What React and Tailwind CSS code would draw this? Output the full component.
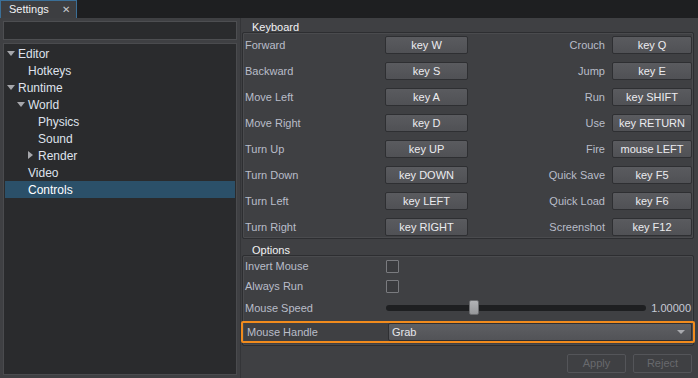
import { useState } from "react";

const tree = [
  { label: "Editor", depth: 0, arrow: "down" },
  { label: "Hotkeys", depth: 1 },
  { label: "Runtime", depth: 0, arrow: "down" },
  { label: "World", depth: 1, arrow: "down" },
  { label: "Physics", depth: 2 },
  { label: "Sound", depth: 2 },
  { label: "Render", depth: 2, arrow: "right" },
  { label: "Video", depth: 1 },
  { label: "Controls", depth: 1, selected: true },
];

const keys = [
  ["Forward", "key W", "Crouch", "key Q"],
  ["Backward", "key S", "Jump", "key E"],
  ["Move Left", "key A", "Run", "key SHIFT"],
  ["Move Right", "key D", "Use", "key RETURN"],
  ["Turn Up", "key UP", "Fire", "mouse LEFT"],
  ["Turn Down", "key DOWN", "Quick Save", "key F5"],
  ["Turn Left", "key LEFT", "Quick Load", "key F6"],
  ["Turn Right", "key RIGHT", "Screenshot", "key F12"],
];

const padL = ["pl-[13px]", "pl-[23px]", "pl-[33px]"];
const arrowL = ["left-[2px]", "left-[12px]", "left-[23px]"];

function KeyButton({ children }) {
  return (
    <div className="h-[18px] rounded-[2px] border border-[#2e2f32] bg-gradient-to-b from-[#5a5b5f] to-[#505155] text-[#ececf0] flex items-center justify-center leading-none">
      {children}
    </div>
  );
}

function Check() {
  return <div className="w-[13px] h-[13px] rounded-[1px] border border-[#7a7b7f] bg-[#3a3b3e]" />;
}

export default function App() {
  const [sel] = useState("Controls");

  return (
    <div className="w-[698px] h-[378px] bg-[#3f4043] flex flex-col overflow-hidden text-[11px]" style={{ fontFamily: "'Liberation Sans', Arial, sans-serif" }}>
      {/* Tab bar */}
      <div className="h-[18px] bg-[#1e1f21] flex shrink-0">
        <div className="w-[77px] bg-[#3d3e41] border-x border-t border-[#3b6f97] flex items-center pl-[8px] pr-[6px] text-[#f2f2f4]">
          <span className="flex-1">Settings</span>
          <span className="text-[#c8c8cc] text-[10px]">✕</span>
        </div>
      </div>

      <div className="flex flex-1 min-h-0">
        {/* Left: search + tree */}
        <div className="w-[234px] ml-[3px] pt-[3px] pb-[3px] flex flex-col gap-[3px] shrink-0">
          <div className="h-[19px] bg-[#2a2b2d] border border-[#4d4e51]" />
          <div className="flex-1 bg-[#2a2b2d] border border-[#4a4b4e] pt-[1px] px-[1px] text-[12px] text-[#dfe2ec]">
            {tree.map((n) => (
              <div key={n.label} className={`relative h-[17px] flex items-center ${padL[n.depth]} ${n.label === sel ? "bg-[#2b5069] text-white" : ""}`}>
                {n.arrow === "down" && (
                  <span className={`absolute ${arrowL[n.depth]} top-[6px] w-0 h-0 border-x-[4px] border-x-transparent border-t-[5px] border-t-[#a6a7ab]`} />
                )}
                {n.arrow === "right" && (
                  <span className={`absolute ${arrowL[n.depth]} top-[4px] w-0 h-0 border-y-[4px] border-y-transparent border-l-[5px] border-l-[#a6a7ab]`} />
                )}
                {n.label}
              </div>
            ))}
          </div>
        </div>

        {/* Right: settings */}
        <div className="flex-1 ml-[3px] border-l border-[#343538] flex flex-col pt-[4px] text-[#b9bdc9]">
          <div className="pl-[11px] leading-[10px] text-[#f2f2f4] relative z-10">Keyboard</div>
          <div className="ml-[1px] mr-[4px] border border-[#2d2e31] rounded-[2px] shadow-[inset_0_0_0_1px_#4a4b4e] pt-[3px] pb-[2px] pl-[2px] pr-[1px] grid grid-cols-[140px_83px_1fr_80px] gap-y-[8px]">
            {keys.map(([l1, k1, l2, k2]) => (
              <div key={l1} className="contents">
                <div className="flex items-center">{l1}</div>
                <KeyButton>{k1}</KeyButton>
                <div className="flex items-center justify-end pr-[7px]">{l2}</div>
                <KeyButton>{k2}</KeyButton>
              </div>
            ))}
          </div>

          <div className="mt-[6px] pl-[11px] leading-[10px] text-[#f2f2f4] relative z-10">Options</div>
          <div className="ml-[1px] mr-[4px] border border-[#2d2e31] rounded-[2px] shadow-[inset_0_0_0_1px_#4a4b4e] pt-[1px] pb-[2px] pl-[2px] pr-[1px] flex flex-col gap-[2px]">
            <div className="h-[18px] flex items-center">
              <div className="w-[141px]">Invert Mouse</div>
              <Check />
            </div>
            <div className="h-[18px] flex items-center">
              <div className="w-[141px]">Always Run</div>
              <Check />
            </div>
            <div className="h-[22px] flex items-center">
              <div className="w-[141px]">Mouse Speed</div>
              <div className="relative w-[260px] h-[6px] rounded-full bg-[#1e1f21]">
                <div className="absolute left-[83px] top-[-5px] w-[10px] h-[15px] rounded-[2px] bg-gradient-to-b from-[#b2b3b6] to-[#96979a] border border-[#6b6c6f]" />
              </div>
              <div className="flex-1 text-right pr-[1px] text-[#c6cad6]">1.00000</div>
            </div>
            <div className="h-[22px] -ml-[4px] -mr-[3px] border-[2px] border-[#f18b1d] rounded-[2px] flex items-center pl-[4px] pr-[1px]">
              <div className="w-[141px]">Mouse Handle</div>
              <div className="flex-1 h-[18px] rounded-[2px] border border-[#2e2f32] bg-gradient-to-b from-[#5e5f63] to-[#525357] flex items-center pl-[3px] pr-[6px] text-[#e6e6ea]">
                <span className="flex-1">Grab</span>
                <span className="w-0 h-0 border-x-[4px] border-x-transparent border-t-[4px] border-t-[#a9aaae]" />
              </div>
            </div>
          </div>

          <div className="flex justify-end gap-[7px] mt-[8px] mr-[6px]">
            <div className="w-[59px] h-[19px] rounded-[2px] border border-[#545559] flex items-center justify-center text-[#68696d]">Apply</div>
            <div className="w-[59px] h-[19px] rounded-[2px] border border-[#545559] flex items-center justify-center text-[#68696d]">Reject</div>
          </div>
        </div>
      </div>
    </div>
  );
}
